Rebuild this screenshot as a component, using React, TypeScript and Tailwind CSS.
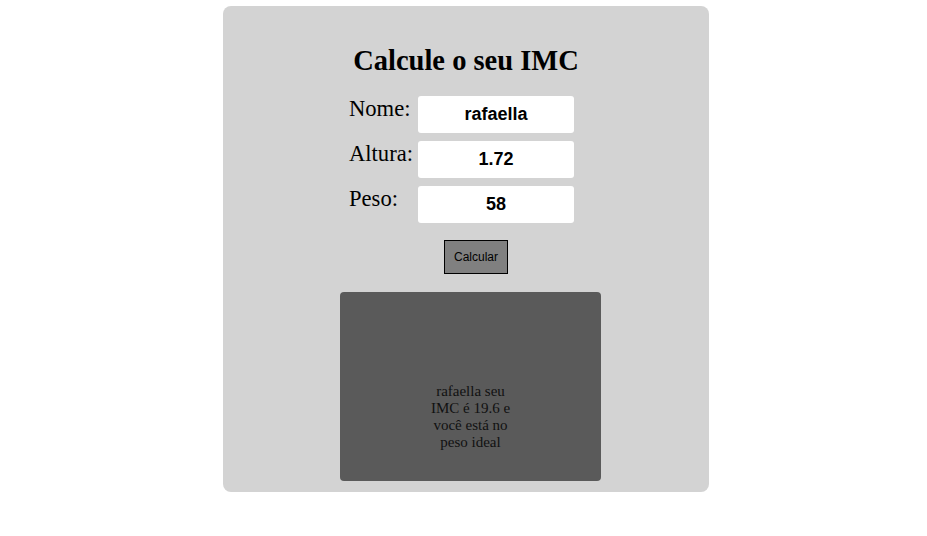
const FIELDS = [
  { label: "Nome:", value: "rafaella" },
  { label: "Altura:", value: "1.72" },
  { label: "Peso:", value: "58" },
];

const serif = "font-['Liberation_Serif','Times_New_Roman',serif]";
const sans = "font-['Liberation_Sans',Arial,sans-serif]";

export default function App() {
  return (
    <div className="min-h-screen bg-white">
      <div className="ml-[223px] pt-[6px]">
        <div className="w-[486px] h-[486px] rounded-lg bg-[#d3d3d3] flex flex-col">
          <h1 className={`${serif} mt-[39px] text-center text-[28.5px] leading-[32px] font-bold text-black`}>
            Calcule o seu IMC
          </h1>

          <div className="mt-[19px] ml-[126px] flex flex-col gap-2">
            {FIELDS.map((f) => (
              <div key={f.label} className="flex items-start">
                <label className={`${serif} w-[69px] pt-[1px] text-[22.6px] leading-[24px] text-black`}>{f.label}</label>
                <input
                  readOnly
                  value={f.value}
                  className={`${sans} w-[156px] h-[37px] rounded-[3px] bg-white text-center text-[18px] font-bold text-black outline-none`}
                />
              </div>
            ))}
          </div>

          <button
            className={`${sans} mt-[17px] ml-[221px] w-[64px] h-[34px] border border-black bg-[#808080] text-[12px] text-black`}
          >
            Calcular
          </button>

          <div className="mt-[18px] ml-[117px] w-[261px] h-[189px] rounded-[4px] bg-[#5a5a5a] flex flex-col items-center pt-[91px]">
            <p className={`${serif} w-[90px] text-center text-[15px] leading-[17px] text-[#111]`}>
              rafaella seu IMC é 19.6 e você está no peso ideal
            </p>
          </div>
        </div>
      </div>
    </div>
  );
}
